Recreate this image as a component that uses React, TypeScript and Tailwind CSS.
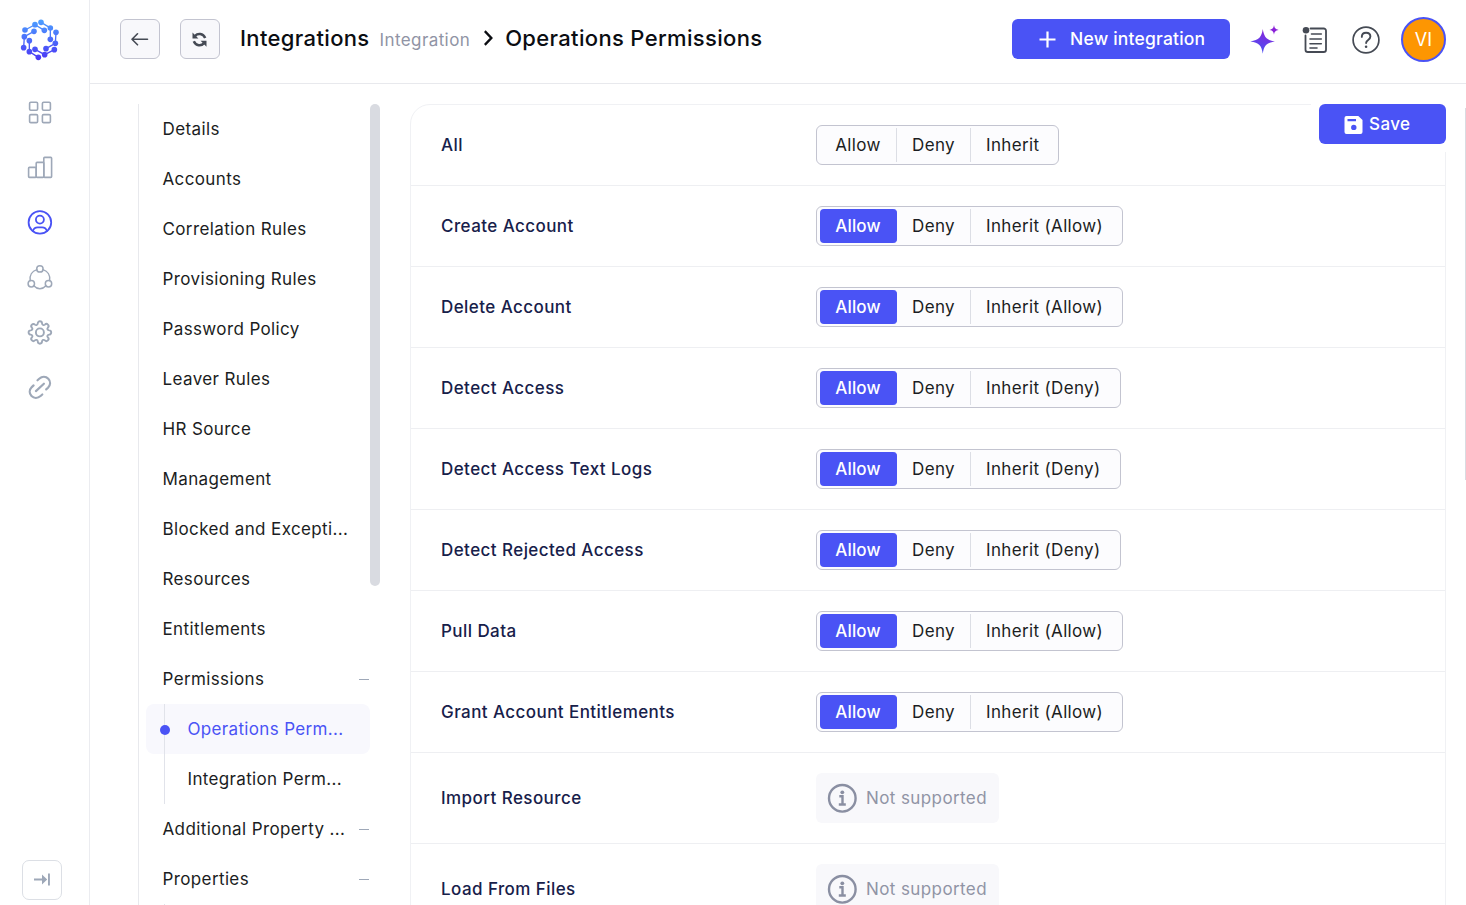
import clsx from "clsx"
import { useState } from "react"

type Choice = "allow" | "deny" | "inherit" | ""

interface NavItem {
  label: string
  collapsible?: boolean
  children?: string[]
}

interface Operation {
  name: string
  value: Choice
  inherit?: string
  supported?: boolean
}

const navItems: NavItem[] = [
  { label: "Details" },
  { label: "Accounts" },
  { label: "Correlation Rules" },
  { label: "Provisioning Rules" },
  { label: "Password Policy" },
  { label: "Leaver Rules" },
  { label: "HR Source" },
  { label: "Management" },
  { label: "Blocked and Excepti..." },
  { label: "Resources" },
  { label: "Entitlements" },
  { label: "Permissions", collapsible: true, children: ["Operations Perm...", "Integration Perm..."] },
  { label: "Additional Property ...", collapsible: true },
  { label: "Properties", collapsible: true, children: [""] },
]

const initialOperations: Operation[] = [
  { name: "All", value: "", inherit: "Inherit" },
  { name: "Create Account", value: "allow", inherit: "Inherit (Allow)" },
  { name: "Delete Account", value: "allow", inherit: "Inherit (Allow)" },
  { name: "Detect Access", value: "allow", inherit: "Inherit (Deny)" },
  { name: "Detect Access Text Logs", value: "allow", inherit: "Inherit (Deny)" },
  { name: "Detect Rejected Access", value: "allow", inherit: "Inherit (Deny)" },
  { name: "Pull Data", value: "allow", inherit: "Inherit (Allow)" },
  { name: "Grant Account Entitlements", value: "allow", inherit: "Inherit (Allow)" },
  { name: "Import Resource", value: "", supported: false },
  { name: "Load From Files", value: "", supported: false },
]

const logoArms = [
  [[75, 90], [105, 74], [133, 91]],
  [[123, 67], [151, 84], [151, 118]],
  [[168, 97], [166, 130], [138, 146]],
  [[163, 149], [134, 164], [105, 148]],
  [[115, 172], [88, 155], [88, 122]],
  [[71, 143], [73, 110], [102, 94]],
]

const Logo = () => (
  <svg width="40" height="42" viewBox="60 57 120 126">
    <defs>
      <linearGradient id="logo" gradientUnits="userSpaceOnUse" x1="0" y1="62" x2="0" y2="180">
        <stop offset="0" stopColor="#4c9dff" />
        <stop offset="1" stopColor="#4a35f5" />
      </linearGradient>
    </defs>
    {logoArms.map((arm, i) => (
      <g key={i} fill="url(#logo)">
        <polyline points={arm.map((p) => p.join(",")).join(" ")} fill="none" stroke="url(#logo)" strokeWidth="4" />
        {arm.map(([x, y]) => <circle key={`${x}-${y}`} cx={x} cy={y} r="8.4" />)}
      </g>
    ))}
  </svg>
)

const railIcons = [
  <g key="grid">
    <rect x="3" y="2.8" width="8" height="8" rx="1.2" />
    <rect x="15.8" y="2.8" width="8" height="8" rx="1.2" />
    <rect x="3" y="15.2" width="8" height="8" rx="1.2" />
    <rect x="15.8" y="15.2" width="8" height="8" rx="1.2" />
  </g>,
  <g key="bars">
    <rect x="2" y="13" width="7.6" height="10" rx="0.8" />
    <rect x="9.6" y="8" width="7.6" height="15" rx="0.8" />
    <rect x="17.2" y="3" width="7.8" height="20" rx="0.8" />
  </g>,
  <g key="user" strokeWidth="1.8">
    <circle cx="13.3" cy="13" r="11.3" />
    <circle cx="13.3" cy="10.2" r="4" />
    <path d="M6.2 21.6c.8-2.4 2.6-3.7 4.8-3.7h4.6c2.2 0 4 1.3 4.8 3.7" />
  </g>,
  <g key="nodes" strokeWidth="1.5">
    <circle cx="13.3" cy="4.5" r="3.2" />
    <circle cx="4.7" cy="19.3" r="3.2" />
    <circle cx="21.9" cy="19.3" r="3.2" />
    <path d="M10.2 5.2C5.6 6.7 2.8 11 3.6 16.2M16.4 5.2c4.6 1.5 7.4 5.8 6.6 11M7.2 21.4c3.5 3.9 8.7 3.9 12.2 0" />
  </g>,
  <g key="gear" strokeWidth="1.9">
    <circle cx="13.3" cy="13" r="4" />
    <path d="M11.2 3.9a2.1 2.1 0 0 1 4.2 0c.1 1.7 1.7 2.4 2.9 1.3a2.1 2.1 0 0 1 3 3c-1.1 1.2-.4 2.7 1.2 2.8a2.1 2.1 0 0 1 0 4.2c-1.6.1-2.3 1.6-1.2 2.8a2.1 2.1 0 0 1-3 3c-1.2-1.1-2.8-.4-2.9 1.2a2.1 2.1 0 0 1-4.2 0c-.1-1.6-1.7-2.3-2.9-1.2a2.1 2.1 0 0 1-3-3c1.1-1.2.4-2.7-1.2-2.8a2.1 2.1 0 0 1 0-4.2c1.6-.1 2.3-1.6 1.2-2.8a2.1 2.1 0 0 1 3-3c1.2 1.1 2.8.4 2.9-1.3z" />
  </g>,
  <g key="link" strokeWidth="2.2">
    <path d="M9.300 16.700l8-7.400" />
    <path d="M10.900 5.900l1.700-1.500c2.900-2.500 6.700-2.400 9.100 0 2.400 2.500 2.400 6.100-.3 8.900l-1.800 1.700" />
    <path d="M15.700 20.100l-1.700 1.500c-2.900 2.500-6.700 2.400-9.100 0-2.400-2.500-2.400-6.100.3-8.900l1.800-1.700" />
  </g>,
]

const Rail = () => (
  <aside className="w-[90px] shrink-0 border-r border-[#ebecf0] flex flex-col h-full pr-[9px]">
    <div className="h-[84px] flex justify-center pt-[19px]"><Logo /></div>
    {railIcons.map((icon, i) => (
      <button key={i} className={clsx("h-[55px] flex items-center justify-center cursor-pointer", i === 2 ? "text-[#4a53f5]" : "text-[#9ea8b8]")}>
        <svg width="27" height="26" viewBox="0.4 -0.4 27 26" fill="none" stroke="currentColor" strokeWidth="1.6" strokeLinecap="round" strokeLinejoin="round">
          {icon}
        </svg>
      </button>
    ))}
    <button className="mt-auto mb-[5px] ml-[22px] w-10 h-10 rounded-[7px] border border-[#dcdfe5] flex items-center justify-center">
      <svg width="18" height="14" viewBox="0 0 18 14" fill="#9ea8b8">
        <path d="M1 5.600h8V1.500l5.200 5-5.200 5V7.400H1zM15 .5h1.900v12H15z" />
      </svg>
    </button>
  </aside>
)

const Header = () => (
  <header className="h-[84px] shrink-0 border-b border-[#e8e9ed] flex items-start pl-[30px] pr-5 pt-[17px]">
    <button className="mt-0.5 w-10 h-10 rounded-md border border-[#c3c4d0] bg-[#f8f8fb] flex items-center justify-center">
      <svg width="18" height="14" viewBox="0 0 18 14" fill="none" stroke="#454a54" strokeWidth="1.6" strokeLinecap="round" strokeLinejoin="round">
        <path d="M16.500 7.300H1.200M6.500 1.800L1 7.300l5.500 5.500" />
      </svg>
    </button>
    <button className="mt-0.5 ml-5 w-10 h-10 rounded-md border border-[#c3c4d0] bg-[#f8f8fb] flex items-center justify-center">
      <svg width="16" height="16" viewBox="0.5 -0.5 16 16" fill="none" stroke="#454a54" strokeWidth="2.5">
        <path d="M3.600 4.300C6.200 1.500 11.600 1.500 13.700 6.500M12.400 11.900C9.800 14.700 4.400 14.700 2.300 9.700" />
        <path d="M1 1v5.900h5.900zM15 15.200V9.300H9.100z" fill="#454a54" stroke="none" />
      </svg>
    </button>
    <div className="flex items-baseline ml-5 h-11 pt-1.5">
      <h1 className="text-[22px] leading-[30px] font-medium text-[#0b0d12] tracking-[0.35px]">Integrations</h1>
      <span className="ml-2.5 text-[17px] text-[#9094a5] tracking-[0.4px]">Integration</span>
      <svg className="ml-[14px] mr-3" width="9" height="16" viewBox="0 0 9 16" fill="none" stroke="#0b0d12" strokeWidth="2.4">
        <path d="M.8 1.200L7.300 8 .8 14.800" />
      </svg>
      <h2 className="text-[22px] leading-[30px] font-medium text-[#0b0d12] tracking-[0.33px] whitespace-nowrap">Operations Permissions</h2>
    </div>
    <div className="ml-auto flex items-center">
      <button className="w-[218px] h-10 mb-0.5 rounded-md bg-[#4a53f5] text-white text-[17.5px] font-medium tracking-[0.2px] flex items-center pl-[27px]">
        <svg className="mr-3.5 mt-0.5" width="17" height="17" viewBox="0 0 17 17" stroke="#fff" strokeWidth="2.2"><path d="M8.500.500v16M.500 8.500h16" /></svg>
        <span className="pt-0.5">New integration</span>
      </button>
      <svg className="ml-5" width="31" height="31" viewBox="0.5 0.5 31 31">
        <defs>
          <linearGradient id="spark" x1="0.7" y1="0" x2="0.4" y2="1">
            <stop offset="0" stopColor="#8a21d8" />
            <stop offset="1" stopColor="#4a53f5" />
          </linearGradient>
        </defs>
        <path d="M13.300 5.500c1.200 8 3.600 11 12.200 12.500-8.600 1.300-11 4-12.200 12.300C12.100 22 9.700 19.300.800 18c8.900-1.500 11.300-4.500 12.500-12.500z" fill="url(#spark)" />
        <path d="M24.500 1.600c.5 3.200 1.400 4.200 4.600 4.800-3.200.600-4.100 1.600-4.600 4.800-.5-3.200-1.400-4.200-4.600-4.800 3.200-.600 4.100-1.600 4.600-4.800z" fill="#8a21d8" />
      </svg>
      <svg className="ml-[21px]" width="26" height="28" viewBox="0 0 26 28" fill="none" stroke="#454a54" strokeWidth="1.8" strokeLinecap="round">
        <path d="M8.500 2.500h13.200a2.300 2.300 0 0 1 2.300 2.300v18.900a2.300 2.300 0 0 1-2.300 2.300H5.800a2.300 2.300 0 0 1-2.300-2.300V9.500" />
        <path d="M9.500 8h9.800M8 13h11.300M8 17.700h11.300M8 22h7" strokeWidth="1.6" />
        <circle cx="4" cy="4.300" r="3.300" fill="#454a54" stroke="none" />
      </svg>
      <svg className="ml-[24px]" width="28" height="28" viewBox="0 0 28 28" fill="none" stroke="#454a54" strokeWidth="1.7" strokeLinecap="round">
        <circle cx="14" cy="14" r="12.900" />
        <path d="M9.800 10.900c0-2.500 1.800-4.200 4.300-4.200s4.300 1.600 4.300 3.900c0 3.500-4.300 3.200-4.300 6.400" strokeWidth="1.9" />
        <circle cx="14.100" cy="20.700" r="1.300" fill="#454a54" stroke="none" />
      </svg>
      <div className="ml-[21px] w-[45px] h-[45px] rounded-full border-2 border-[#4a53f5] bg-[#fd9602] text-white text-[18px] flex items-center justify-center">VI</div>
    </div>
  </header>
)

const SideNav = () => {
  const [active, setActive] = useState<string>("Operations Perm...")
  return (
    <nav className="w-[242px] h-full flex overflow-hidden">
      <div className="w-px bg-[#e8e9ed] shrink-0"></div>
      <div className="w-[231px] pl-[7px] text-[17px] tracking-[0.38px] text-[#1b1d22]">
        {navItems.map((item) => (
          <div key={item.label}>
            <button className="w-full h-[50px] flex items-center pl-4 text-left" onClick={() => setActive(item.label)}>
              <span className="pt-0.5 pl-[0.5px] whitespace-nowrap">{item.label}</span>
              {item.collapsible && <span className="ml-auto mr-[1px] w-2.5 h-px bg-[#9ea8b8]"></span>}
            </button>
            {item.children?.map((child) => (
              <button
                key={child}
                onClick={() => setActive(child)}
                className={clsx("w-full h-[50px] flex items-center text-left rounded-lg", active === child && "bg-[#f8f8fd] text-[#4a53f5]")}
              >
                <span className="ml-[18px] w-px h-full bg-[#e1e3ea] flex items-center justify-center">
                  {active === child && <span className="mt-0.5 w-2.5 h-2.5 shrink-0 rounded-full bg-[#4a53f5]"></span>}
                </span>
                <span className="ml-[22.5px] pt-0.5 tracking-[0.34px] whitespace-nowrap">{child}</span>
              </button>
            ))}
          </div>
        ))}
      </div>
      <div className="w-2.5 h-[482px] rounded-full bg-[#d9dbe1] shrink-0"></div>
    </nav>
  )
}

type SegmentProps = {
  operation: Operation
  onChange: (value: Choice) => void
}
const Segment = ({ operation, onChange }: SegmentProps) => {
  const options: { key: Choice; label: string }[] = [
    { key: "allow", label: "Allow" },
    { key: "deny", label: "Deny" },
    { key: "inherit", label: operation.inherit || "Inherit" },
  ]
  return (
    <div className="h-10 rounded-md border border-[#c3c4d0] bg-[#fcfcfe] flex items-center px-[3px] text-[17px] tracking-[0.35px] text-[#1b1d22]">
      {options.map((option, i) => (
        <button
          key={option.key}
          onClick={() => onChange(option.key)}
          className={clsx(
            "h-[34px] px-[15px] pt-0.5 border-r whitespace-nowrap",
            i === 0 && "w-[77px]",
            i === 1 && "w-[74px]",
            operation.value === option.key
              ? "bg-[#4a53f5] border-[#4a53f5] text-white font-medium rounded-[4px] tracking-[0.2px]"
              : i < 2 ? "border-[#dcdee5]" : "border-transparent"
          )}
        >{option.label}</button>
      ))}
    </div>
  )
}

const NotSupported = () => (
  <div className="w-[183px] h-[50px] rounded-md bg-[#f8f8fb] flex items-center pl-[11px] text-[#9094a5] text-[17px] tracking-[0.4px]">
    <svg className="mr-[9px]" width="30" height="30" viewBox="-0.3 -0.3 30 30" fill="none" stroke="#8a8fa2" strokeWidth="2.4">
      <circle cx="15" cy="15" r="13.300" />
      <path d="M12 13h3.200v8M11.500 21.200h7" />
      <circle cx="15" cy="9" r="1.900" fill="#8a8fa2" stroke="none" />
    </svg>
    <span className="pt-0.5">Not supported</span>
  </div>
)

const App = () => {
  const [operations, setOperations] = useState<Operation[]>(initialOperations)

  const handleChange = (name: string, value: Choice) => {
    setOperations(operations.map((o) => (name === "All" || o.name === name ? { ...o, value } : o)))
  }

  return (
    <div className="w-full h-screen flex overflow-hidden bg-white font-['Inter',sans-serif]">
      <Rail />
      <div className="flex-1 min-w-0 flex flex-col">
        <Header />
        <div className="flex-1 min-h-0 flex pl-12 pt-5 overflow-hidden">
          <SideNav />
          <main className="ml-[30px] flex-1 min-w-0 relative">
            <div className="border border-[#f0f1f4] rounded-[20px]">
              {operations.map((operation) => (
                <div key={operation.name} className="flex items-center px-[30px] py-5 border-b border-[#eeeff2]">
                  <div className="w-[375px] pt-0.5 text-[17px] font-medium tracking-[0.43px] text-[#17204a]">{operation.name}</div>
                  {operation.supported === false
                    ? <NotSupported />
                    : <Segment operation={operation} onChange={(value) => handleChange(operation.name, value)} />}
                </div>
              ))}
            </div>
            <div className="absolute top-0 right-0 pl-2 pb-2 bg-white">
              <button className="w-[127px] h-10 rounded-md bg-[#4a53f5] text-white text-[17px] font-medium tracking-[0.4px] flex items-center pl-[25px]">
                <svg className="mr-1.5" width="19" height="19" viewBox="0 -0.500 19 19">
                  <path fillRule="evenodd" fill="#fff" d="M2.500.500h11.800l4.200 4v12a2 2 0 0 1-2 2h-14a2 2 0 0 1-2-2v-14a2 2 0 0 1 2-2zM3.500 3.500v2.200h8.500V3.500zM9.800 9.200a2.700 2.700 0 1 0 0 5.400 2.700 2.700 0 0 0 0-5.400z" />
                </svg>
                <span className="pt-px">Save</span>
              </button>
            </div>
          </main>
          <div className="ml-[19px] mt-1 w-px h-[372px] bg-[#d9dbe1]"></div>
        </div>
      </div>
    </div>
  )
}

export default App
